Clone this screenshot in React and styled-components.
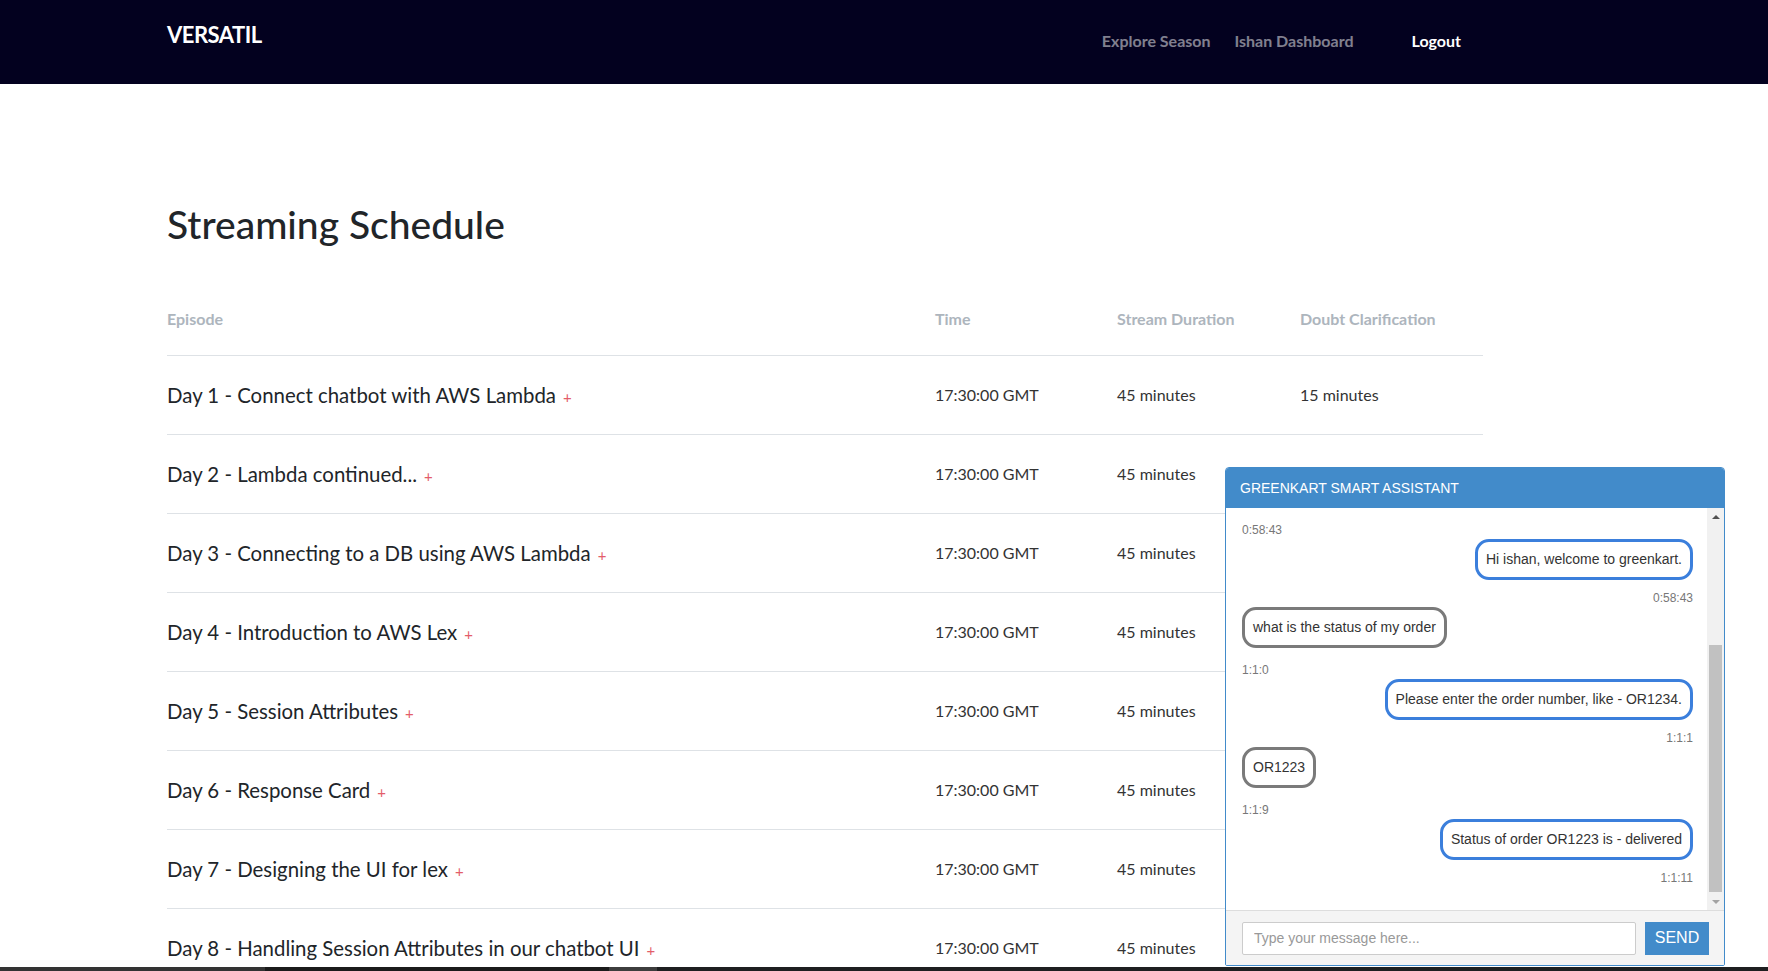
import React, { useLayoutEffect, useRef } from 'react';
import styled, { createGlobalStyle } from 'styled-components';

const GlobalStyle = createGlobalStyle`
  html, body {
    margin: 0;
    padding: 0;
    height: 100%;
    overflow: hidden;
    background: #fff;
  }
  body {
    font-family: Lato, "Segoe UI", "Noto Sans", sans-serif;
    color: #212529;
  }
  * { box-sizing: border-box; }
`;

const Navbar = styled.nav`
  height: 84px;
  background: #03011f;
`;

const NavInner = styled.div`
  width: 1316px;
  margin-left: 167px;
  display: flex;
  align-items: flex-start;
`;

const Brand = styled.a`
  padding-top: 20px;
  font-size: 22px;
  line-height: 30px;
  font-weight: 700;
  letter-spacing: -0.5px;
  color: #fff;
  text-decoration: none;
`;

const NavLinks = styled.ul`
  display: flex;
  list-style: none;
  margin: 0 0 0 auto;
  padding: 29px 10px 0 0;
`;

const NavLink = styled.li`
  padding: 0 12px;
  margin-left: ${(p) => (p.$push ? '34px' : '0')};
  font-size: 16px;
  line-height: 24px;
  font-weight: 700;
  color: ${(p) => (p.$active ? '#fff' : 'rgba(255, 255, 255, 0.5)')};
  cursor: pointer;
`;

const Main = styled.main`
  width: 1316px;
  margin-left: 167px;
  padding-top: 116px;
`;

const Title = styled.h1`
  margin: 0 0 35px;
  font-size: 39px;
  line-height: 48px;
  font-weight: 500;
  color: #212529;
`;

const Row = styled.div`
  display: grid;
  grid-template-columns: 768px 182px 183px 183px;
  align-items: center;
  border-bottom: 1px solid #dee2e6;
`;

const HeadCell = styled.div`
  padding: 24px 0;
  font-size: 16px;
  line-height: 24px;
  font-weight: 700;
  color: #adb5bd;
`;

const EpisodeCell = styled.div`
  padding: 24px 0;
  height: 78px;
  font-size: 20.4px;
  line-height: 30px;
  color: #212529;
`;

const Plus = styled.span`
  margin-left: 7px;
  font-size: 15px;
  line-height: 1;
  color: #e35d6a;
`;

const Cell = styled.div`
  font-size: 16px;
  line-height: 24px;
  color: #333;
`;

const Widget = styled.section`
  position: fixed;
  right: 43px;
  bottom: 5px;
  width: 500px;
  height: 499px;
  display: flex;
  flex-direction: column;
  border: 1px solid #428bca;
  border-radius: 4px 4px 2px 2px;
  background: #fff;
  font-family: "Liberation Sans", Arial, sans-serif;
  overflow: hidden;
`;

const WidgetHead = styled.header`
  height: 40px;
  flex: none;
  display: flex;
  align-items: center;
  padding-left: 14px;
  background: #428bca;
  color: #fff;
  font-size: 14px;
`;

const ChatBody = styled.div`
  flex: 1;
  min-height: 0;
  display: flex;
`;

const Messages = styled.div`
  flex: 1;
  overflow: hidden;
  padding: 16px 14px 23px 16px;
  display: flex;
  flex-direction: column;
`;

const Rail = styled.div`
  width: 17px;
  flex: none;
  display: flex;
  flex-direction: column;
  background: #f1f1f1;
`;

const RailButton = styled.div`
  height: 17px;
  flex: none;
  display: flex;
  align-items: center;
  justify-content: center;

  &::before {
    content: '';
    border-left: 4px solid transparent;
    border-right: 4px solid transparent;
    ${(p) =>
      p.$down
        ? 'border-top: 4px solid #a3a3a3;'
        : 'border-bottom: 4px solid #505050;'}
  }
`;

const RailTrack = styled.div`
  flex: 1;
  display: flex;
  flex-direction: column;
  justify-content: flex-end;
  padding: 0 2px 1px;
`;

const Thumb = styled.div`
  height: 247px;
  background: #c1c1c1;
`;

const Message = styled.div`
  display: flex;
  flex-direction: column;
  align-items: ${(p) => (p.$bot ? 'flex-end' : 'flex-start')};
  margin-bottom: 2px;
  flex: none;
`;

const Bubble = styled.div`
  padding: 9px 8px;
  border: 3px solid ${(p) => (p.$bot ? '#3b7fdc' : '#7a7a7a')};
  border-radius: 14px;
  font-size: 14px;
  line-height: 17px;
  color: #333;
  background: #fff;
`;

const Stamp = styled.div`
  margin-top: ${(p) => (p.$bot ? '11px' : '15px')};
  font-size: 12px;
  line-height: 14px;
  color: #777;
`;

const InputBar = styled.form`
  height: 55px;
  flex: none;
  display: flex;
  align-items: center;
  gap: 9px;
  padding: 0 15px 0 16px;
  background: #f4f4f4;
  border-top: 1px solid #ddd;
`;

const TextInput = styled.input`
  flex: 1;
  height: 33px;
  padding: 0 11px;
  border: 1px solid #ccc;
  border-radius: 2px;
  font-family: inherit;
  font-size: 14px;
  color: #333;
  background: #fff;
  &::placeholder {
    color: #999;
  }
`;

const SendButton = styled.button`
  width: 64px;
  height: 33px;
  border: none;
  background: #428bca;
  color: #fff;
  font-family: inherit;
  font-size: 16px;
`;

const Taskbar = styled.div`
  position: fixed;
  left: 0;
  right: 0;
  bottom: 0;
  height: 4px;
  display: flex;
  background: #1e1f20;
`;

const TaskSlot = styled.span`
  width: ${(p) => p.$w}px;
  background: ${(p) => p.$c};
`;

const episodes = [
  'Day 1 - Connect chatbot with AWS Lambda',
  'Day 2 - Lambda continued...',
  'Day 3 - Connecting to a DB using AWS Lambda',
  'Day 4 - Introduction to AWS Lex',
  'Day 5 - Session Attributes',
  'Day 6 - Response Card',
  'Day 7 - Designing the UI for lex',
  'Day 8 - Handling Session Attributes in our chatbot UI',
  'Day 9 - Deploying the chatbot',
];

const chat = [
  { bot: false, text: 'hi', time: '0:58:31' },
  { bot: true, text: 'Hello! What is your name?', time: '0:58:32' },
  { bot: false, text: 'ishan', time: '0:58:43' },
  { bot: true, text: 'Hi ishan, welcome to greenkart.', time: '0:58:43' },
  { bot: false, text: 'what is the status of my order', time: '1:1:0' },
  { bot: true, text: 'Please enter the order number, like - OR1234.', time: '1:1:1' },
  { bot: false, text: 'OR1223', time: '1:1:9' },
  { bot: true, text: 'Status of order OR1223 is - delivered', time: '1:1:11' },
];

const ChatWidget = () => {
  const listRef = useRef(null);

  useLayoutEffect(() => {
    const el = listRef.current;
    if (el) el.scrollTop = el.scrollHeight;
  }, []);

  return (
    <Widget>
      <WidgetHead>GREENKART SMART ASSISTANT</WidgetHead>
      <ChatBody>
        <Messages ref={listRef}>
          {chat.map((m, i) => (
            <Message key={i} $bot={m.bot}>
              <Bubble $bot={m.bot}>{m.text}</Bubble>
              <Stamp $bot={m.bot}>{m.time}</Stamp>
            </Message>
          ))}
        </Messages>
        <Rail>
          <RailButton />
          <RailTrack>
            <Thumb />
          </RailTrack>
          <RailButton $down />
        </Rail>
      </ChatBody>
      <InputBar onSubmit={(e) => e.preventDefault()}>
        <TextInput placeholder="Type your message here..." />
        <SendButton type="submit">SEND</SendButton>
      </InputBar>
    </Widget>
  );
};

const App = () => (
  <>
    <GlobalStyle />
    <Navbar>
      <NavInner>
        <Brand>VERSATIL</Brand>
        <NavLinks>
          <NavLink>Explore Season</NavLink>
          <NavLink>Ishan Dashboard</NavLink>
          <NavLink $push $active>Logout</NavLink>
        </NavLinks>
      </NavInner>
    </Navbar>
    <Main>
      <Title>Streaming Schedule</Title>
      <Row>
        <HeadCell>Episode</HeadCell>
        <HeadCell>Time</HeadCell>
        <HeadCell>Stream Duration</HeadCell>
        <HeadCell>Doubt Clarification</HeadCell>
      </Row>
      {episodes.map((title) => (
        <Row key={title}>
          <EpisodeCell>
            {title}
            <Plus>+</Plus>
          </EpisodeCell>
          <Cell>17:30:00 GMT</Cell>
          <Cell>45 minutes</Cell>
          <Cell>15 minutes</Cell>
        </Row>
      ))}
    </Main>
    <ChatWidget />
    <Taskbar>
      <TaskSlot $w={265} $c="#333333" />
      <TaskSlot $w={344} $c="#1b1b1b" />
      <TaskSlot $w={48} $c="#3d3d3d" />
    </Taskbar>
  </>
);

export default App;
